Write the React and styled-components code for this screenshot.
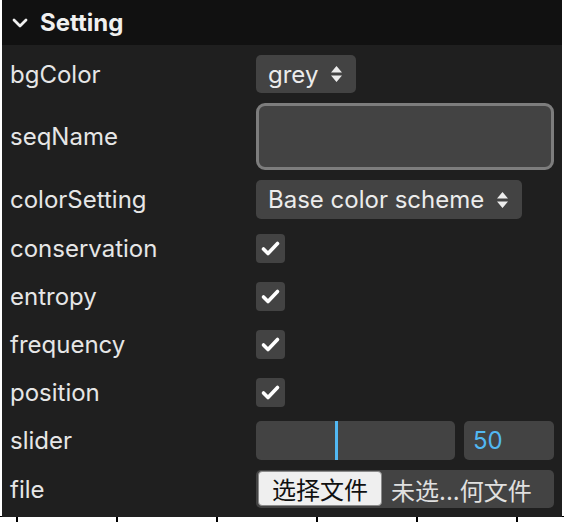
import React from 'react';
import styled, { createGlobalStyle } from 'styled-components';

const Global = createGlobalStyle`
  html, body { margin: 0; padding: 0; background: #fff; }
  body { font-family: Inter, "Noto Sans", "Noto Sans CJK SC", sans-serif; }
`;

/** page behind the panel **/
const Stage = styled.div`
  position: relative;
  width: 564px;
  height: 522px;
  overflow: hidden;
  background: #fff;
`;

const Axis = styled.div`
  position: absolute;
  left: 0;
  right: 0;
  top: 516px;
  height: 6px;
  border-top: 1px solid #000;
  background: repeating-linear-gradient(
    to right,
    transparent 0 16px,
    #000 16px 18px,
    transparent 18px 100px
  );
`;

/** PANEL **/
const Panel = styled.div`
  position: absolute;
  top: 0;
  left: 2px;
  width: 560px;
  background: #1f1f1f;
  color: #e6e6e6;
`;

const Header = styled.div`
  height: 45px;
  display: flex;
  align-items: center;
  gap: 12px;
  padding-left: 10px;
  background: #111111;
  color: #f0f0f0;
  font-size: 24px;
  font-weight: 700;
`;

const Body = styled.div`
  padding: 5px 8px 4px 8px;
`;

const Row = styled.div`
  display: grid;
  grid-template-columns: 246px 1fr;
  align-items: center;
  min-height: ${p => p.h || 38}px;
  padding: 5px 0;
`;

const Label = styled.div`
  font-size: 24px;
  color: #e6e6e6;
`;

const Select = styled.div`
  justify-self: start;
  display: flex;
  align-items: center;
  gap: 12px;
  height: 39px;
  padding: 0 13px 0 12px;
  border-radius: 5px;
  background: #434343;
  font-size: 24px;
  color: #ececec;
`;

const TextBox = styled.div`
  height: 67px;
  box-sizing: border-box;
  border: 3px solid #7d7d7d;
  border-radius: 9px;
  background: #434343;
`;

const Check = styled.div`
  width: 29px;
  height: 29px;
  border-radius: 4px;
  background: #434343;
  display: flex;
  align-items: center;
  justify-content: center;
`;

const SliderRow = styled.div`
  display: grid;
  grid-template-columns: 199px 1fr;
  gap: 9px;
  height: 39px;
`;

const Track = styled.div`
  position: relative;
  border-radius: 5px;
  background: #434343;
`;

const Thumb = styled.div`
  position: absolute;
  top: 0;
  bottom: 0;
  width: 3px;
  background: #52b8f2;
`;

const NumberBox = styled.div`
  display: flex;
  align-items: center;
  padding-left: 9px;
  border-radius: 5px;
  background: #434343;
  color: #52b8f2;
  font-size: 24px;
`;

const FileBox = styled.div`
  display: flex;
  align-items: center;
  gap: 9px;
  height: 38px;
  padding-left: 2px;
  border-radius: 5px;
  background: #434343;
  font-family: Inter, "Noto Sans CJK SC", sans-serif;
  font-size: 24px;
`;

const FileButton = styled.div`
  display: flex;
  align-items: center;
  justify-content: center;
  width: 124px;
  height: 35px;
  margin-top: -2px;
  box-sizing: border-box;
  border: 1px solid #8a8a8a;
  border-radius: 4px;
  background: #efefef;
  color: #111;
`;

const FileName = styled.span`
  color: #e0e0e0;
`;

const Updown = () => (
  <svg width="13" height="18" viewBox="0 0 13 18">
    <path d="M6.5 1 L12 7.5 H1 Z M6.5 17 L12 10.5 H1 Z" fill="#ececec" />
  </svg>
);

const Tick = () => (
  <svg width="29" height="29" viewBox="0 0 29 29">
    <path d="M7.5 15 L12 19.5 L21.5 9.5" fill="none" stroke="#fff" strokeWidth="3.6"
      strokeLinecap="round" strokeLinejoin="round" />
  </svg>
);

const Chevron = () => (
  <svg width="16" height="12" viewBox="0 0 16 12">
    <path d="M2 3 L8 9 L14 3" fill="none" stroke="#f0f0f0" strokeWidth="2.8"
      strokeLinecap="round" strokeLinejoin="round" />
  </svg>
);

const checks = ['conservation', 'entropy', 'frequency', 'position'];

export default function App() {
  const value = 50;
  return (
    <Stage>
      <Global />
      <Axis />
      <Panel>
        <Header>
          <Chevron />
          Setting
        </Header>
        <Body>
          <Row>
            <Label>bgColor</Label>
            <Select style={{ height: 38 }}>grey <Updown /></Select>
          </Row>
          <Row>
            <Label>seqName</Label>
            <TextBox />
          </Row>
          <Row>
            <Label>colorSetting</Label>
            <Select>Base color scheme <Updown /></Select>
          </Row>
          {checks.map(c => (
            <Row key={c} h={38}>
              <Label>{c}</Label>
              <Check><Tick /></Check>
            </Row>
          ))}
          <Row>
            <Label>slider</Label>
            <SliderRow>
              <Track>
                <Thumb style={{ left: value * 1.58 }} />
              </Track>
              <NumberBox>{value}</NumberBox>
            </SliderRow>
          </Row>
          <Row>
            <Label>file</Label>
            <FileBox>
              <FileButton>选择文件</FileButton>
              <FileName>未选...何文件</FileName>
            </FileBox>
          </Row>
        </Body>
      </Panel>
    </Stage>
  );
}
